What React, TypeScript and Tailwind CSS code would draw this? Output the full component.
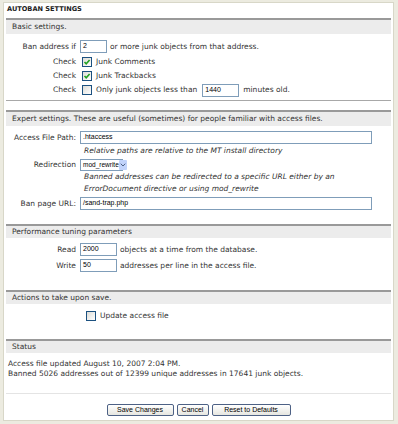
import { ChevronDown } from 'lucide-react';

const font = "font-['DejaVu_Sans',sans-serif]";

function Check({ on }: { on?: boolean }) {
  return (
    <span className="flex h-[10px] w-[10px] items-center justify-center border border-[#1c5180] bg-gradient-to-br from-[#dcdcd7] to-white">
      {on && (
        <svg width="8" height="8" viewBox="0 0 8 8">
          <path d="M1.5 4 L3.2 5.8 L6.6 2" stroke="#21a121" strokeWidth="1.6" fill="none" />
        </svg>
      )}
    </span>
  );
}

function Input({ value, w }: { value: string; w: string }) {
  return (
    <span
      className={`flex h-[13px] shrink-0 items-center border border-[#7f9db9] bg-white pl-[2px] font-['Liberation_Sans',sans-serif] text-[7px] text-black ${w}`}
    >
      {value}
    </span>
  );
}

function Band({ title, tall }: { title: string; tall?: boolean }) {
  return (
    <div
      className={`mx-[2px] flex items-center border-t-2 border-[#999999] bg-[#ececec] px-[6px] ${tall ? 'h-[16px]' : 'h-[14px]'}`}
    >
      {title}
    </div>
  );
}

function Label({ children }: { children: React.ReactNode }) {
  return <span className="w-[76px] shrink-0 pr-[4px] text-right">{children}</span>;
}

export default function App() {
  return (
    <div className={`h-[424px] w-[398px] bg-[#ecebe0] pt-[2px] pl-[3px] text-[7.5px] text-[#333] ${font}`}>
      <div className="h-[419px] w-[391px] border border-[#d8d7c8] bg-white">
        <div className="flex h-[15px] items-center pb-[2px] pl-[3px] text-[6.6px] font-bold text-[#222]">
          AUTOBAN SETTINGS
        </div>

        <Band title="Basic settings." tall />
        <div className="pt-[6px]">
          <div className="flex h-[13px] items-center">
            <Label>Ban address if</Label>
            <Input value="2" w="w-[27px]" />
            <span className="ml-[3px]">or more junk objects from that address.</span>
          </div>
          <div className="mt-[2px] flex h-[14px] items-center">
            <Label>Check</Label>
            <span className="ml-[2px]">
              <Check on />
            </span>
            <span className="ml-[4px]">Junk Comments</span>
          </div>
          <div className="flex h-[14px] items-center">
            <Label>Check</Label>
            <span className="ml-[2px]">
              <Check on />
            </span>
            <span className="ml-[4px]">Junk Trackbacks</span>
          </div>
          <div className="flex h-[14px] items-center">
            <Label>Check</Label>
            <span className="ml-[2px]">
              <Check />
            </span>
            <span className="ml-[4px]">Only junk objects less than</span>
            <span className="ml-[5px]">
              <Input value="1440" w="w-[37px]" />
            </span>
            <span className="ml-[4px]">minutes old.</span>
          </div>
        </div>
        <div className="mx-[2px] mt-[3px] border-t border-[#a8a8a8]" />

        <div className="mt-[9px]">
          <Band title="Expert settings. These are useful (sometimes) for people familiar with access files." tall />
        </div>
        <div className="pt-[5px]">
          <div className="flex h-[13px] items-center">
            <Label>Access File Path:</Label>
            <Input value=".htaccess" w="w-[292px]" />
          </div>
          <div className="flex h-[14px] items-center pl-[80px] italic">
            Relative paths are relative to the MT install directory
          </div>
          <div className="flex h-[13px] items-center">
            <Label>Redirection</Label>
            <span className="flex h-[12px] w-[43px] items-center justify-between border border-[#7f9db9] bg-white pl-[2px] font-['Liberation_Sans',sans-serif] text-[6.5px] text-black">
              mod_rewrite
              <span className="flex h-[10px] w-[10px] items-center justify-center rounded-[1px] bg-[#c1d3fb]">
                <ChevronDown size={8} strokeWidth={3} className="text-[#4d6185]" />
              </span>
            </span>
          </div>
          <div className="pl-[80px] italic leading-[12px]">
            Banned addresses can be redirected to a specific URL either by an
            <br />
            ErrorDocument directive or using mod_rewrite
          </div>
          <div className="mt-[2px] flex h-[13px] items-center">
            <Label>Ban page URL:</Label>
            <Input value="/sand-trap.php" w="w-[292px]" />
          </div>
        </div>

        <div className="mt-[14px]">
          <Band title="Performance tuning parameters" />
        </div>
        <div className="pt-[5px]">
          <div className="flex h-[13px] items-center">
            <Label>Read</Label>
            <Input value="2000" w="w-[37px]" />
            <span className="ml-[3px]">objects at a time from the database.</span>
          </div>
          <div className="mt-[3px] flex h-[13px] items-center">
            <Label>Write</Label>
            <Input value="50" w="w-[37px]" />
            <span className="ml-[3px]">addresses per line in the access file.</span>
          </div>
        </div>

        <div className="mt-[18px]">
          <Band title="Actions to take upon save." />
        </div>
        <div className="pt-[5px]">
          <div className="flex h-[13px] items-center pl-[82px]">
            <Check />
            <span className="ml-[4px]">Update access file</span>
          </div>
        </div>

        <div className="mt-[17px]">
          <Band title="Status" />
        </div>
        <div className="px-[4px] pt-[6px] leading-[10px]">
          <div>Access file updated August 10, 2007 2:04 PM.</div>
          <div>Banned 5026 addresses out of 12399 unique addresses in 17641 junk objects.</div>
        </div>
        <div className="mx-[2px] mt-[14px] border-t border-[#e4e4e4]" />
        <div className="mt-[10px] flex justify-center gap-[3px] font-['Liberation_Sans',sans-serif] text-[7px] text-black">
          <button className="h-[12px] w-[67px] rounded-[2px] border border-[#4d6185] bg-gradient-to-b from-white to-[#e6e6e0]">
            Save Changes
          </button>
          <button className="h-[12px] w-[32px] rounded-[2px] border border-[#4d6185] bg-gradient-to-b from-white to-[#e6e6e0]">
            Cancel
          </button>
          <button className="h-[12px] w-[79px] rounded-[2px] border border-[#4d6185] bg-gradient-to-b from-white to-[#e6e6e0]">
            Reset to Defaults
          </button>
        </div>
      </div>
    </div>
  );
}
